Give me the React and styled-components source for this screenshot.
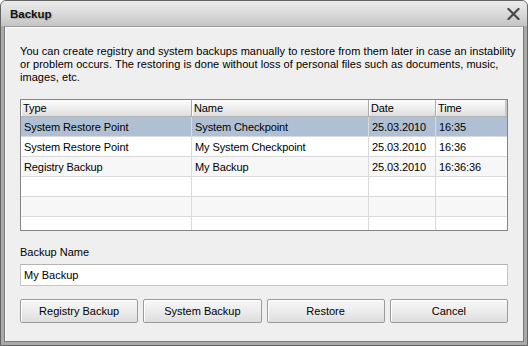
import React from "react";
import styled, { createGlobalStyle } from "styled-components";

const Global = createGlobalStyle`
  html, body { margin: 0; padding: 0; background: #ffffff; }
  body { font-family: "Liberation Sans", Arial, sans-serif; font-size: 11px; color: #000; }
  * { box-sizing: border-box; }
`;

const Window = styled.div`
  width: 528px;
  height: 346px;
  border: 1px solid #646464;
  border-radius: 6px 6px 0 0;
  background: #a9a9a9;
  display: flex;
  flex-direction: column;
  overflow: hidden;
`;

const TitleBar = styled.div`
  height: 25px;
  flex: none;
  display: flex;
  align-items: center;
  justify-content: space-between;
  padding: 0 7px 0 9px;
  background: linear-gradient(#ececec 0%, #dcdcdc 45%, #c4c4c4 100%);
`;

const Title = styled.span`
  font-weight: bold;
  font-size: 11.5px;
  color: #111;
  text-shadow: 1px 1px 1px rgba(0, 0, 0, 0.22);
  margin-top: 1px;
`;

const CloseButton = styled.button`
  border: 0;
  padding: 0;
  background: none;
  width: 13px;
  height: 12px;
  display: flex;
  margin-top: 1px;
`;

const Frame = styled.div`
  flex: 1;
  display: flex;
  padding: 0 3px 3px 3px;
  min-width: 0;
`;

const Content = styled.div`
  flex: 1;
  min-width: 0;
  border: 1px solid #7a7a7a;
  border-top-color: #9c9c9c;
  background: #efefef;
  box-shadow: inset 1px 1px 0 #fafafa;
  padding: 18px 15px 0 15px;
  display: flex;
  flex-direction: column;
`;

const Description = styled.p`
  margin: 0;
  min-width: 0;
  line-height: 13px;
  font-size: 11px;
  letter-spacing: 0.05px;
  white-space: nowrap;
`;

const Table = styled.div`
  margin-top: 15px;
  height: 132px;
  border: 1px solid #848484;
  background: #fff;
  overflow: hidden;
`;

const Row = styled.div`
  display: grid;
  grid-template-columns: 171px 177px 67px 1fr;
  height: ${(p) => (p.$header ? 17 : 20)}px;
  background: ${(p) =>
    p.$header
      ? "linear-gradient(#fdfdfd, #ebebeb 60%, #dedede)"
      : p.$selected
      ? "#b0c0d4"
      : p.$alt
      ? "#f7f7f7"
      : "#ffffff"};
  border-bottom: 1px solid ${(p) => (p.$header ? "#b4b4b4" : "#dadada")};
`;

const Cell = styled.div`
  padding: 0 0 0 ${(p) => (p.$header ? 2 : 3)}px;
  display: flex;
  align-items: center;
  white-space: nowrap;
  overflow: hidden;
  letter-spacing: -0.1px;
  border-right: 1px solid ${(p) => (p.$header ? "#a9a9a9" : "#dadada")};
  box-shadow: ${(p) => (p.$header ? "inset 1px 0 0 #ffffff" : "none")};
  &:last-child {
    border-right: ${(p) => (p.$header ? "2px solid #c8c8c8" : "0")};
  }
`;

const Label = styled.div`
  margin-top: 15px;
  line-height: 13px;
`;

const TextInput = styled.input`
  margin-top: 5px;
  height: 22px;
  width: 100%;
  border: 1px solid #c6c6c6;
  border-top-color: #b4b4b4;
  background: #fff;
  font-family: "Liberation Sans", Arial, sans-serif;
  font-size: 11px;
  color: #000;
  padding: 0 3px;
  outline: none;
`;

const ButtonRow = styled.div`
  margin-top: 13px;
  display: grid;
  grid-template-columns: repeat(4, minmax(0, 1fr));
  gap: 5px;
`;

const Button = styled.button`
  height: 24px;
  border: 1px solid #9b9b9b;
  border-radius: 2px;
  background: linear-gradient(#f7f7f7, #ececec 50%, #dedede);
  font-family: "Liberation Sans", Arial, sans-serif;
  font-size: 11px;
  color: #000;
  padding: 0;
  box-shadow: inset 1px 1px 0 #ffffff;
`;

const rows = [
  ["System Restore Point", "System Checkpoint", "25.03.2010", "16:35"],
  ["System Restore Point", "My System Checkpoint", "25.03.2010", "16:36"],
  ["Registry Backup", "My Backup", "25.03.2010", "16:36:36"],
  ["", "", "", ""],
  ["", "", "", ""],
  ["", "", "", ""],
];

export default function App() {
  return (
    <>
      <Global />
      <Window>
        <TitleBar>
          <Title>Backup</Title>
          <CloseButton aria-label="Close">
            <svg width="13" height="12" viewBox="0 0 13 12">
              <path d="M1.5 1 L11.5 11 M11.5 1 L1.5 11" stroke="#4a4a4a" strokeWidth="2.2" strokeLinecap="square" />
            </svg>
          </CloseButton>
        </TitleBar>
        <Frame>
          <Content>
            <Description>
              You can create registry and system backups manually to restore from them later in case an instability
              <br />
              or problem occurs. The restoring is done without loss of personal files such as documents, music,
              <br />
              images, etc.
            </Description>
            <Table>
              <Row $header>
                <Cell $header>Type</Cell>
                <Cell $header>Name</Cell>
                <Cell $header>Date</Cell>
                <Cell $header>Time</Cell>
              </Row>
              {rows.map((r, i) => (
                <Row key={i} $selected={i === 0} $alt={i === 2 || i === 4}>
                  {r.map((c, j) => (
                    <Cell key={j}>{c}</Cell>
                  ))}
                </Row>
              ))}
            </Table>
            <Label>Backup Name</Label>
            <TextInput defaultValue="My Backup" />
            <ButtonRow>
              <Button>Registry Backup</Button>
              <Button>System Backup</Button>
              <Button>Restore</Button>
              <Button>Cancel</Button>
            </ButtonRow>
          </Content>
        </Frame>
      </Window>
    </>
  );
}
